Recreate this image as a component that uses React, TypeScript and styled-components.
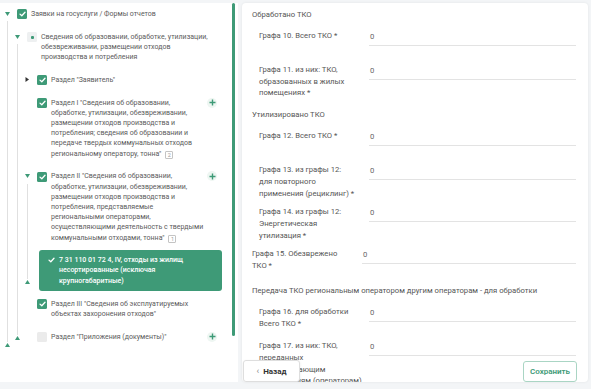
import React from 'react';
import styled, { createGlobalStyle } from 'styled-components';

const GREEN = '#3e9a77';

const GlobalStyle = createGlobalStyle`
  html, body { margin: 0; padding: 0; }
  body {
    background: #f3f5f7;
    font-family: Roboto, 'Noto Sans', sans-serif;
  }
  * { box-sizing: border-box; }
`;

type Check = 'on' | 'part' | 'off';

interface TreeItem {
  id: string;
  lines: string[];
  check: Check;
  caret?: 'down' | 'right';
  plus?: boolean;
  badge?: string;
  tail?: number;
  selected?: string[];
  children?: TreeItem[];
}

const tree: TreeItem = {
  id: 'root',
  lines: ['Заявки на госуслуги / Формы отчетов'],
  check: 'on',
  caret: 'down',
  tail: 2,
  children: [
    {
      id: 'svod',
      lines: [
        'Сведения об образовании, обработке, утилизации,',
        'обезвреживании, размещении отходов',
        'производства и потребления',
      ],
      check: 'part',
      caret: 'down',
      tail: 9,
      children: [
        { id: 'z', lines: ['Раздел "Заявитель"'], check: 'on', caret: 'right' },
        {
          id: 'r1',
          lines: [
            'Раздел I "Сведения об образовании,',
            'обработке, утилизации, обезвреживании,',
            'размещении отходов производства и',
            'потребления; сведения об образовании и',
            'передаче твердых коммунальных отходов',
            'региональному оператору, тонна"',
          ],
          check: 'on',
          plus: true,
          badge: '2',
        },
        {
          id: 'r2',
          lines: [
            'Раздел II "Сведения об образовании,',
            'обработке, утилизации, обезвреживании,',
            'размещении отходов производства и',
            'потребления, представляемые',
            'региональными операторами,',
            'осуществляющими деятельность с твердыми',
            'коммунальными отходами, тонна"',
          ],
          check: 'on',
          caret: 'down',
          plus: true,
          badge: '1',
          tail: 9,
          selected: [
            '7 31 110 01 72 4, IV, отходы из жилищ',
            'несортированные (исключая',
            'крупногабаритные)',
          ],
        },
        {
          id: 'r3',
          lines: ['Раздел III "Сведения об эксплуатируемых', 'объектах захоронения отходов"'],
          check: 'on',
        },
        { id: 'pr', lines: ['Раздел "Приложения (документы)"'], check: 'off', plus: true },
      ],
    },
  ],
};

type Field = { kind: 'title'; text: string } | { kind: 'field'; lines: string[]; flat?: boolean };

const form: Field[] = [
  { kind: 'title', text: 'Обработано ТКО' },
  { kind: 'field', lines: ['Графа 10. Всего ТКО *'] },
  { kind: 'field', lines: ['Графа 11. из них: ТКО,', 'образованных в жилых', 'помещениях *'] },
  { kind: 'title', text: 'Утилизировано ТКО' },
  { kind: 'field', lines: ['Графа 12. Всего ТКО *'] },
  { kind: 'field', lines: ['Графа 13. из графы 12:', 'для повторного', 'применения (рециклинг) *'] },
  { kind: 'field', lines: ['Графа 14. из графы 12:', 'Энергетическая', 'утилизация *'] },
  { kind: 'field', lines: ['Графа 15. Обезврежено', 'ТКО *'], flat: true },
  { kind: 'title', text: 'Передача ТКО региональным оператором другим операторам - для обработки' },
  { kind: 'field', lines: ['Графа 16. для обработки', 'Всего ТКО *'] },
  {
    kind: 'field',
    lines: ['Графа 17. из них: ТКО,', 'переданных', 'обрабатывающим', 'организациям (операторам),'],
  },
];

function Lines({ lines }: { lines: string[] }) {
  return (
    <>
      {lines.map((l, i) => (
        <React.Fragment key={i}>
          {i > 0 && <br />}
          {l}
        </React.Fragment>
      ))}
    </>
  );
}

function CheckMark({ color = '#fff' }: { color?: string }) {
  return (
    <svg width="7" height="6" viewBox="0 0 7 6">
      <path d="M1 3.1 L2.8 4.8 L6 1.3" fill="none" stroke={color} strokeWidth="1.3" strokeLinecap="round" strokeLinejoin="round" />
    </svg>
  );
}

function Caret({ dir }: { dir: 'down' | 'right' | 'up' }) {
  const d = dir === 'down' ? 'M0 0 H5 L2.5 4 Z' : dir === 'up' ? 'M0 4 H5 L2.5 0 Z' : 'M0.5 0 V5 L4 2.5 Z';
  return (
    <svg width="5" height={dir === 'right' ? 5 : 4} viewBox={dir === 'right' ? '0 0 5 5' : '0 0 5 4'}>
      <path d={d} fill={dir === 'right' ? '#333' : GREEN} />
    </svg>
  );
}

function TreeNode({ item }: { item: TreeItem }) {
  const hasGuide = item.caret === 'down';
  return (
    <NodeBox>
      <CaretCol $tail={item.tail ?? 0}>
        <CaretBox>{item.caret && <Caret dir={item.caret} />}</CaretBox>
        {hasGuide && (
          <>
            <GuideLine />
            <Caret dir="up" />
          </>
        )}
      </CaretCol>
      <NodeMain>
        <Head>
          <Box $state={item.check}>
            {item.check === 'on' && <CheckMark />}
            {item.check === 'part' && <Dot />}
          </Box>
          <Label>
            <Lines lines={item.lines} />
            {item.badge && <Badge>{item.badge}</Badge>}
          </Label>
          {item.plus && (
            <PlusBtn>
              <svg width="7" height="7" viewBox="0 0 7 7">
                <path d="M3.5 0.5 V6.5 M0.5 3.5 H6.5" stroke={GREEN} strokeWidth="1.4" />
              </svg>
            </PlusBtn>
          )}
        </Head>
        {item.selected && (
          <Selected>
            <CheckMark />
            <span>
              <Lines lines={item.selected} />
            </span>
          </Selected>
        )}
        {item.children?.map((c) => <TreeNode key={c.id} item={c} />)}
      </NodeMain>
    </NodeBox>
  );
}

export default function App() {
  return (
    <>
      <GlobalStyle />
      <Page>
        <LeftPanel>
          <Tree>
            <TreeNode item={tree} />
          </Tree>
          <ScrollTrack>
            <Thumb />
          </ScrollTrack>
        </LeftPanel>
        <Card>
          <FormBody>
            {form.map((f, i) =>
              f.kind === 'title' ? (
                <SectionTitle key={i}>{f.text}</SectionTitle>
              ) : (
                <FieldRow key={i} $flat={f.flat}>
                  <FieldLabel>
                    <Lines lines={f.lines} />
                  </FieldLabel>
                  <FieldInput>0</FieldInput>
                </FieldRow>
              ),
            )}
          </FormBody>
          <Footer>
            <BackButton>
              <span>‹</span>Назад
            </BackButton>
            <SaveButton>Сохранить</SaveButton>
          </Footer>
        </Card>
      </Page>
    </>
  );
}

const Page = styled.div`
  width: 591px;
  height: 389px;
  display: flex;
  gap: 4px;
  padding: 3px 3px 7px 0;
  overflow: hidden;
`;

const LeftPanel = styled.div`
  width: 238px;
  flex: none;
  display: flex;
  background: #fff;
  padding-right: 3px;
`;

const Tree = styled.div`
  flex: 1;
  padding-left: 2px;
  overflow: hidden;
`;

const ScrollTrack = styled.div`
  width: 3px;
  flex: none;
`;

const Thumb = styled.div`
  width: 3px;
  height: 333px;
  border-radius: 2px;
  background: ${GREEN};
`;

const NodeBox = styled.div`
  display: flex;
`;

const CaretCol = styled.div<{ $tail: number }>`
  width: 10px;
  flex: none;
  display: flex;
  flex-direction: column;
  align-items: center;
  padding-top: 5.5px;
  padding-bottom: ${(p) => p.$tail}px;
`;

const CaretBox = styled.div`
  height: 10.2px;
  display: flex;
  align-items: center;
  justify-content: center;
`;

const GuideLine = styled.div`
  flex: 1;
  width: 1px;
  background: #e0e0e0;
  margin: 2px 0 1px;
`;

const NodeMain = styled.div`
  flex: 1;
  min-width: 0;
  display: flex;
  flex-direction: column;
`;

const Head = styled.div`
  display: flex;
  align-items: flex-start;
  gap: 4px;
  padding: 5.5px 15px 7px 5px;
`;

const Box = styled.div<{ $state: Check }>`
  width: 10px;
  height: 10px;
  flex: none;
  margin-top: 0.5px;
  border-radius: 1.5px;
  display: flex;
  align-items: center;
  justify-content: center;
  background: ${(p) => (p.$state === 'on' ? GREEN : p.$state === 'part' ? '#eef0f1' : '#ebebeb')};
`;

const Dot = styled.div`
  width: 3px;
  height: 3px;
  border-radius: 1px;
  background: ${GREEN};
`;

const Label = styled.div`
  flex: 1;
  font-size: 7px;
  line-height: 10.2px;
  color: #5b5b5b;
  white-space: nowrap;
`;

const Badge = styled.span`
  display: inline-block;
  margin-left: 4px;
  width: 8px;
  height: 8px;
  border: 1px solid #c4c4c4;
  border-radius: 1px;
  font-size: 5.5px;
  line-height: 6px;
  text-align: center;
  color: #999;
  vertical-align: -1px;
`;

const PlusBtn = styled.div`
  width: 10px;
  height: 10px;
  flex: none;
  border-radius: 50%;
  background: #eef6f2;
  display: flex;
  align-items: center;
  justify-content: center;
`;

const Selected = styled.div`
  margin: 0 10px 2px 7px;
  padding: 5px 6px 5px 9px;
  background: ${GREEN};
  border-radius: 3px;
  display: flex;
  align-items: flex-start;
  gap: 4px;
  color: #fff;
  font-size: 7px;
  font-weight: 500;
  line-height: 10.5px;
  white-space: nowrap;

  & > svg {
    margin-top: 2.5px;
    flex: none;
  }
`;

const Card = styled.div`
  flex: 1;
  position: relative;
  background: #fff;
  border-radius: 4px;
  box-shadow: 0 0 3px rgba(0, 0, 0, 0.07);
  overflow: hidden;
`;

const FormBody = styled.div`
  display: flex;
  flex-direction: column;
  gap: 7px;
  padding: 6px 12px 0 10px;
`;

const SectionTitle = styled.div`
  font-size: 7.7px;
  line-height: 12px;
  color: #555;
  margin: 3px 0 2px;
  &:first-child {
    margin-top: 0;
  }
`;

const FieldRow = styled.div<{ $flat?: boolean }>`
  display: flex;
  align-items: flex-start;
  gap: 6px;
  padding-left: ${(p) => (p.$flat ? 0 : 7)}px;
`;

const FieldLabel = styled.div`
  width: 104px;
  flex: none;
  font-size: 7.7px;
  line-height: 11.7px;
  color: #555;
  white-space: nowrap;
`;

const FieldInput = styled.div`
  flex: 1;
  height: 16px;
  margin-bottom: 11px;
  padding: 2px 0 0 1px;
  border-bottom: 1px solid #e3e3e3;
  font-size: 7.7px;
  color: #666;
`;

const Footer = styled.div`
  position: absolute;
  left: 1px;
  right: 11px;
  bottom: 0;
  display: flex;
  justify-content: space-between;
  align-items: flex-end;
`;

const BackButton = styled.div`
  width: 57px;
  height: 22px;
  display: flex;
  align-items: center;
  justify-content: center;
  gap: 4px;
  background: #fff;
  border: 1px solid #dedede;
  border-radius: 3px;
  box-shadow: 0 1px 3px rgba(0, 0, 0, 0.08);
  font-size: 8px;
  font-weight: 700;
  color: #333;

  & > span {
    font-weight: 400;
    color: #888;
    font-size: 9px;
  }
`;

const SaveButton = styled.div`
  width: 54px;
  height: 21px;
  display: flex;
  align-items: center;
  justify-content: center;
  background: #fff;
  border: 1px solid #aad5c4;
  border-radius: 3px;
  font-size: 8px;
  font-weight: 600;
  color: ${GREEN};
`;
